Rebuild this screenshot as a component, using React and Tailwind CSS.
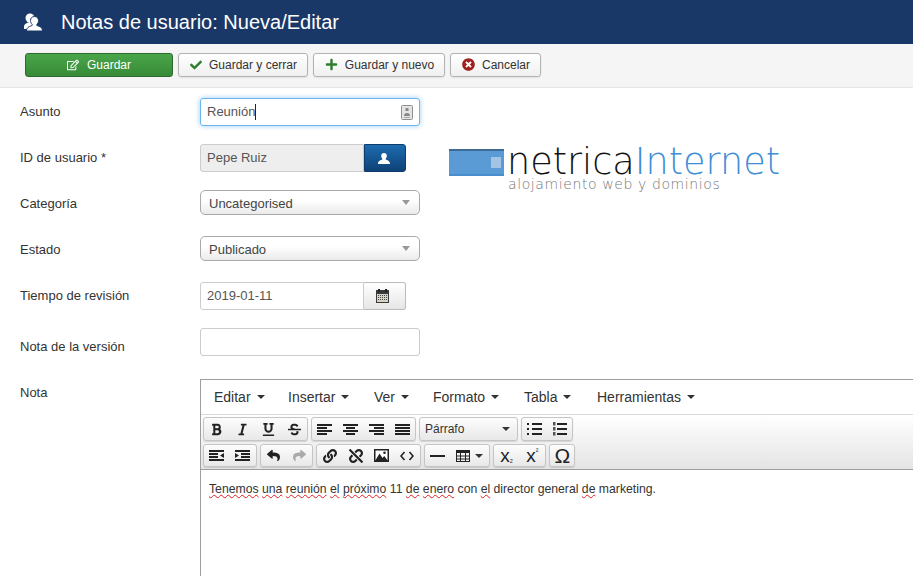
import React from 'react';
import {
  FaRegEdit, FaCheck, FaPlus, FaTimesCircle, FaBold, FaItalic, FaUnderline, FaStrikethrough,
  FaReply, FaShare, FaLink, FaUnlink,
} from 'react-icons/fa';

const MENUS = [
  { name: 'Editar', w: 'w-[74px]' },
  { name: 'Insertar', w: 'w-[86px]' },
  { name: 'Ver', w: 'w-[59px]' },
  { name: 'Formato', w: 'w-[91px]' },
  { name: 'Tabla', w: 'w-[73px]' },
  { name: 'Herramientas', w: 'w-[120px]' },
];

const MISSPELT = ['Tenemos', 'una', 'reunión', 'el', 'próximo'];

function ActionBtn({ icon, label, w }) {
  return (
    <button className={`h-6 ${w} flex items-center justify-center gap-[7px] pl-[1px] rounded-[3px] border border-[#b3b3b3] bg-gradient-to-b from-white to-[#f0f0f0] text-[12px] text-[#333] shadow-[0_1px_2px_rgba(0,0,0,0.08)]`}>
      {icon}
      {label}
    </button>
  );
}

function Row({ label, mb, pad = '', children }) {
  return (
    <div className={`flex items-center ${mb}`}>
      <label className={`w-[180px] shrink-0 text-[13px] text-[#333] ${pad}`}>{label}</label>
      {children}
    </div>
  );
}

function Select({ value }) {
  return (
    <div className="w-[220px] h-[25px] flex items-center justify-between pl-2 pr-[9px] rounded-[5px] border border-[#aaa] bg-gradient-to-b from-white from-40% to-[#eaeaea] text-[13px] text-[#444]">
      <span className="pt-[2px]">{value}</span>
      <span className="w-0 h-0 border-x-[4px] border-x-transparent border-t-[5px] border-t-[#999]" />
    </div>
  );
}

function Group({ children }) {
  return (
    <div className="flex h-full rounded-[3px] border border-[#c5c5c5] bg-gradient-to-b from-[#fdfdfd] to-[#e8e8e8] shadow-[0_1px_1px_rgba(0,0,0,0.12)]">
      {children}
    </div>
  );
}

function Tool({ children, cls = 'w-[25.750px]' }) {
  return <span className={`${cls} flex items-center justify-center text-[#222]`}>{children}</span>;
}

function Word({ children }) {
  return <span className="underline decoration-wavy decoration-[#e02020] decoration-1 underline-offset-[1px] [text-decoration-skip-ink:none]">{children}</span>;
}

// horizontal bars, as in the align icons
function Bars({ rows }) {
  return (
    <svg width="15" height="11" viewBox="0 0 15 11" fill="#222">
      {rows.map(([x, w], i) => <rect key={i} x={x} y={i * 3} width={w} height="2" />)}
    </svg>
  );
}

function ListIcon({ numbered }) {
  return (
    <svg width="15" height="14" viewBox="0 0 15 14" fill="#222">
      {[1, 6, 11].map((y) => (
        <g key={y}>
          {numbered
            ? <rect x="1" y={y - 1} width="2.500" height="3.500" fill="#555" />
            : <rect x="0" y={y} width="2" height="2" />}
          <rect x="5" y={y} width="10" height="2" />
        </g>
      ))}
    </svg>
  );
}

function IndentIcon({ out }) {
  return (
    <svg width="15" height="11" viewBox="0 0 15 11" fill="#222">
      <rect x="0" y="0" width="15" height="2" />
      <rect x="0" y="9" width="15" height="2" />
      {out ? (
        <>
          <rect x="0" y="3" width="9" height="2" />
          <rect x="0" y="6" width="9" height="2" />
          <path d="M11 5.500 15 3v5z" />
        </>
      ) : (
        <>
          <rect x="6" y="3" width="9" height="2" />
          <rect x="6" y="6" width="9" height="2" />
          <path d="M4 5.500 0 3v5z" />
        </>
      )}
    </svg>
  );
}

function UsersIcon() {
  return (
    <svg width="20" height="19" viewBox="0 0 20 19" className="shrink-0">
      <circle cx="7" cy="5" r="4.500" fill="#fff" />
      <path d="M1 14c0-3 3-4 5-5h3l3 3-5 4H1z" fill="#fff" />
      <path d="M11.500 3.500c2.600 0 4 1.800 4 4 0 1.500-.7 3-1.600 3.800v1.200c2 .8 5.600 1.500 5.600 5.500H3.500c0-4 3.600-4.700 5.600-5.500v-1.200C8.200 10.500 7.500 9 7.500 7.500c0-2.200 1.400-4 4-4z" fill="#fff" stroke="#1a3867" strokeWidth="1" />
    </svg>
  );
}

function BustIcon() {
  return (
    <svg width="12" height="11" viewBox="0 0 12 11" fill="#fff">
      <path d="M6 0c1.800 0 2.800 1.300 2.800 3 0 1.100-.5 2.200-1.100 2.800v.8c1.300.6 4.300 1 4.300 4.400H0c0-3.400 3-3.800 4.300-4.400v-.8C3.700 5.200 3.200 4.100 3.200 3 3.200 1.300 4.200 0 6 0z" />
    </svg>
  );
}

function CalendarIcon() {
  return (
    <svg width="13" height="14" viewBox="0 0 13 14">
      <rect x="0" y="1" width="13" height="13" fill="#3a3a3a" />
      <rect x="2" y="0" width="2" height="3" fill="#222" />
      <rect x="9" y="0" width="2" height="3" fill="#222" />
      <rect x="1" y="5" width="11" height="8" fill="#d8d4c4" />
      {[6, 8, 10].map((y) => [2, 4, 6, 8, 10].map((x) => (
        <rect key={`${x}-${y}`} x={x} y={y} width="1" height="1" fill="#4a4a4a" />
      )))}
    </svg>
  );
}

function TitleIcon() {
  return (
    <svg width="12" height="15" viewBox="0 0 12 15">
      <rect x="0.500" y="0.500" width="11" height="14" rx="1" fill="#e4e4e4" stroke="#8f8f8f" />
      <rect x="4.500" y="3" width="3" height="3" fill="#888" />
      <path d="M3 11c0-2 1-3 3-3s3 1 3 3z" fill="#888" />
      <rect x="3" y="12" width="6" height="1" fill="#aaa" />
    </svg>
  );
}

function ImageIcon() {
  return (
    <svg width="15" height="13" viewBox="0 0 15 13">
      <rect x="0.750" y="0.750" width="13.500" height="11.500" fill="#fff" stroke="#222" strokeWidth="1.500" />
      <circle cx="10.500" cy="3.800" r="1.300" fill="#222" />
      <path d="M1 12 5.500 4.500 8.500 9l1.800-2L14 12z" fill="#222" />
    </svg>
  );
}

function TableIcon() {
  return (
    <svg width="14" height="12" viewBox="0 0 14 12" fill="none" stroke="#222">
      <rect x="0.500" y="0.500" width="13" height="11" strokeWidth="1" />
      <rect x="0" y="0" width="14" height="3" fill="#222" stroke="none" />
      <path d="M0 6h14M0 9h14M4.500 0v12M9.500 0v12" strokeWidth="1" />
    </svg>
  );
}

function Caret() {
  return <span className="w-0 h-0 border-x-[4px] border-x-transparent border-t-[4px] border-t-[#333]" />;
}

export default function App() {
  return (
    <div className="h-screen overflow-hidden bg-white font-['Liberation_Sans',Arial,sans-serif]">
      {/* Title bar */}
      <header className="h-11 bg-[#1a3867] flex items-center pl-[23px] gap-[18px]">
        <UsersIcon />
        <h1 className="text-[20px] text-white">Notas de usuario: Nueva/Editar</h1>
      </header>

      {/* Toolbar */}
      <div className="h-[44px] pb-[2px] bg-[#f5f5f5] border-b border-[#e5e5e5] flex items-center pl-[25px] gap-[5px]">
        <button className="h-6 w-[148px] flex items-center justify-center gap-[8px] rounded-[3px] border border-[#2c6b2c] bg-gradient-to-b from-[#4aa64a] to-[#378a37] text-[12px] text-white">
          <FaRegEdit className="text-[12px]" />
          Guardar
        </button>
        <ActionBtn w="w-[130px]" label="Guardar y cerrar" icon={<FaCheck className="text-[#2f7d2f] text-[12px]" />} />
        <ActionBtn w="w-[132px]" label="Guardar y nuevo" icon={<FaPlus className="text-[#2f7d2f] text-[13px]" />} />
        <ActionBtn w="w-[91px]" label="Cancelar" icon={<FaTimesCircle className="text-[#a02020] text-[13px]" />} />
      </div>

      <main className="pt-[10px] pl-5">
        <div className="flex">
          <div className="w-[400px]">
            <Row label="Asunto" mb="mb-[18px]">
              <div className="w-[220px] h-7 flex items-center justify-between pl-[6px] pr-[6px] rounded-[3px] border border-[#6cb6ee] shadow-[0_0_5px_rgba(82,168,236,0.6)] text-[13px] text-[#555]">
                <span className="border-r border-[#222] leading-[16px]">Reunión</span>
                <TitleIcon />
              </div>
            </Row>
            <Row label="ID de usuario *" mb="mb-[18px]">
              <div className="w-[164px] h-7 flex items-center pl-[6px] rounded-l-[3px] border border-[#ccc] bg-[#eee] text-[13px] text-[#555]">Pepe Ruiz</div>
              <button className="w-[42px] h-7 pr-[2px] flex items-center justify-center rounded-r-[3px] bg-gradient-to-b from-[#1d6cb0] to-[#0f4278] border border-[#0f3c6e]">
                <BustIcon />
              </button>
            </Row>
            <Row label="Categoría" mb="mb-[21px]" pad="pt-[2px]"><Select value="Uncategorised" /></Row>
            <Row label="Estado" mb="mb-[21px]" pad="pt-[2px]"><Select value="Publicado" /></Row>
            <Row label="Tiempo de revisión" mb="mb-[18px]">
              <div className="w-[164px] h-7 flex items-center pl-[6px] rounded-l-[3px] border border-[#ccc] text-[13px] text-[#555]">2019-01-11</div>
              <button className="w-[42px] h-7 pr-[4px] flex items-center justify-center rounded-r-[3px] border border-l-0 border-[#bbb] bg-gradient-to-b from-white to-[#e6e6e6]">
                <CalendarIcon />
              </button>
            </Row>
            <Row label="Nota de la versión" mb="mb-[23px]" pad="translate-y-[5px]">
              <div className="w-[220px] h-7 rounded-[3px] border border-[#ccc]" />
            </Row>
          </div>

          {/* Logo */}
          <div className="ml-[29px] mt-[41px] w-[340px] h-[60px] flex items-start">
            <div className="mt-[10px] w-[55px] h-[27px] shrink-0 flex items-center justify-end pr-[3px] bg-[#5b9bd5] border-t-2 border-t-[#3e6a96] border-b-2 border-b-[#4a8dcc]">
              <span className="w-[10px] h-[11px] bg-[#a3c4e2]" />
            </div>
            <div className="font-['DejaVu_Sans',sans-serif] font-extralight">
              <div className="text-[36.600px] leading-[30px] mt-[8px] ml-[3px] whitespace-nowrap text-[#111]">
                netrica<span className="text-[#3f8ed6]">Internet</span>
              </div>
              <div className="text-[14px] leading-[14px] ml-[4px] tracking-[0.6px] text-[#777] whitespace-nowrap">alojamiento web y dominios</div>
            </div>
          </div>
        </div>

        {/* Editor */}
        <div className="flex">
          <label className="w-[180px] shrink-0 text-[13px] text-[#333] mt-[4px]">Nota</label>
          <div className="w-[800px] h-[300px] shrink-0 border border-[#9e9e9e]">
            <div className="h-[35px] flex items-center pl-[13px] border-b border-[#d9d9d9]">
              {MENUS.map((m) => (
                <span key={m.name} className={`${m.w} shrink-0 flex items-center gap-[6px] text-[14px] text-[#333]`}>
                  {m.name}
                  <Caret />
                </span>
              ))}
            </div>
            <div className="h-[55px] pl-[2px] pt-[2px] border-b border-[#9e9e9e] bg-gradient-to-b from-white to-[#e4e4e4]">
              <div className="flex gap-[3px] h-6 mb-[3px]">
                <Group>
                  <Tool><FaBold className="text-[13px]" /></Tool>
                  <Tool><FaItalic className="text-[13px]" /></Tool>
                  <Tool><FaUnderline className="text-[13px]" /></Tool>
                  <Tool><FaStrikethrough className="text-[13px]" /></Tool>
                </Group>
                <Group>
                  <Tool><Bars rows={[[0, 15], [0, 10], [0, 15], [0, 10]]} /></Tool>
                  <Tool><Bars rows={[[0, 15], [3, 9], [0, 15], [3, 9]]} /></Tool>
                  <Tool><Bars rows={[[0, 15], [5, 10], [0, 15], [5, 10]]} /></Tool>
                  <Tool><Bars rows={[[0, 15], [0, 15], [0, 15], [0, 15]]} /></Tool>
                </Group>
                <Group>
                  <div className="w-[97px] flex items-center justify-between pl-[5px] pr-[7px] text-[12px] text-[#333]">
                    Párrafo
                    <Caret />
                  </div>
                </Group>
                <Group>
                  <Tool cls="w-[25px]"><ListIcon /></Tool>
                  <Tool cls="w-[25px]"><ListIcon numbered /></Tool>
                </Group>
              </div>
              <div className="flex gap-[3px] h-[23px]">
                <Group>
                  <Tool><IndentIcon out /></Tool>
                  <Tool><IndentIcon /></Tool>
                </Group>
                <Group>
                  <Tool><FaReply className="text-[13px]" /></Tool>
                  <Tool><FaShare className="text-[13px] text-[#aaa]" /></Tool>
                </Group>
                <Group>
                  <Tool><FaLink className="text-[14px]" /></Tool>
                  <Tool><FaUnlink className="text-[14px]" /></Tool>
                  <Tool><ImageIcon /></Tool>
                  <Tool>
                    <svg width="14" height="10" viewBox="0 0 14 10" fill="none" stroke="#222" strokeWidth="1.600"><path d="M4.500 1 1 5l3.500 4M9.500 1 13 5l-3.500 4" /></svg>
                  </Tool>
                </Group>
                <Group>
                  <Tool><span className="w-[15px] h-[2px] bg-[#222]" /></Tool>
                  <Tool cls="w-[38px] gap-[5px]">
                    <TableIcon />
                    <Caret />
                  </Tool>
                </Group>
                <Group>
                  <Tool><span className="text-[19px] leading-none">x<span className="text-[8px]">₂</span></span></Tool>
                  <Tool><span className="text-[19px] leading-none">x<span className="text-[8px] align-[8px]">²</span></span></Tool>
                </Group>
                <Group>
                  <Tool cls="w-[24px]"><span className="text-[21px] leading-none">Ω</span></Tool>
                </Group>
              </div>
            </div>
            <p className="pt-[11px] pl-2 text-[12.220px] leading-[16px] text-[#333]">
              {MISSPELT.map((w) => <React.Fragment key={w}><Word>{w}</Word>{' '}</React.Fragment>)}
              11 <Word>de</Word> <Word>enero</Word> con <Word>el</Word> director general <Word>de</Word> marketing.
            </p>
          </div>
        </div>
      </main>
    </div>
  );
}
